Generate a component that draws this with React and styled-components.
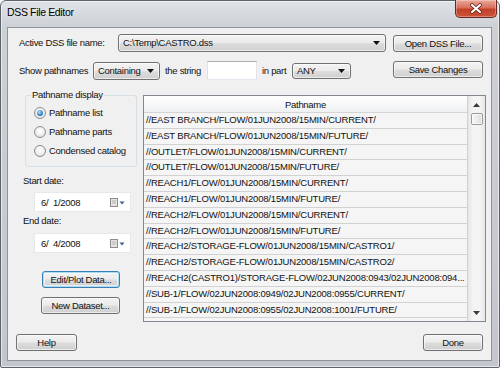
import React from 'react';
import styled, { createGlobalStyle, css } from 'styled-components';

const GlobalStyle = createGlobalStyle`
  html, body { margin: 0; padding: 0; background: #fff; }
  body { font-family: "Liberation Sans", Arial, sans-serif; }
  * { box-sizing: border-box; }
`;

const PATHS = [
  '//EAST BRANCH/FLOW/01JUN2008/15MIN/CURRENT/',
  '//EAST BRANCH/FLOW/01JUN2008/15MIN/FUTURE/',
  '//OUTLET/FLOW/01JUN2008/15MIN/CURRENT/',
  '//OUTLET/FLOW/01JUN2008/15MIN/FUTURE/',
  '//REACH1/FLOW/01JUN2008/15MIN/CURRENT/',
  '//REACH1/FLOW/01JUN2008/15MIN/FUTURE/',
  '//REACH2/FLOW/01JUN2008/15MIN/CURRENT/',
  '//REACH2/FLOW/01JUN2008/15MIN/FUTURE/',
  '//REACH2/STORAGE-FLOW/01JUN2008/15MIN/CASTRO1/',
  '//REACH2/STORAGE-FLOW/01JUN2008/15MIN/CASTRO2/',
  '//REACH2(CASTRO1)/STORAGE-FLOW/02JUN2008:0943/02JUN2008:094...',
  '//SUB-1/FLOW/02JUN2008:0949/02JUN2008:0955/CURRENT/',
  '//SUB-1/FLOW/02JUN2008:0955/02JUN2008:1001/FUTURE/',
];

const uiText = css`
  font-family: "Liberation Sans", Arial, sans-serif;
  font-size: 9.5px;
  letter-spacing: -0.3px;
  color: #111;
  white-space: nowrap;
`;

const face = css`
  background: linear-gradient(180deg, #f3f3f3 0%, #ebebeb 48%, #dddddd 52%, #cfcfcf 100%);
  border: 1px solid #707070;
  border-radius: 3px;
  box-shadow: inset 0 0 0 1px rgba(255, 255, 255, 0.6);
`;

const Window = styled.div`
  width: 500px;
  height: 368px;
  border: 1px solid #5d636b;
  border-radius: 6px 6px 2px 2px;
  background: linear-gradient(180deg, #dfe2e6 0%, #cdd1d6 26px, #c3c7cd 100%);
  box-shadow: inset 0 0 0 1px rgba(255, 255, 255, 0.55);
  padding: 0 7px 6px 6px;
  display: flex;
  flex-direction: column;
`;

const TitleBar = styled.div`
  height: 26px;
  display: flex;
  align-items: flex-start;
  justify-content: space-between;
`;

const Title = styled.div`
  font-family: "Liberation Sans", Arial, sans-serif;
  font-size: 10.5px;
  letter-spacing: -0.35px;
  line-height: 12px;
  padding-top: 5px;
  color: #000;
  text-shadow: 0 0 6px rgba(255, 255, 255, 0.9);
`;

const CloseButton = styled.div`
  width: 42px;
  height: 18px;
  margin: -1px -5px 0 0;
  border: 1px solid #6a281e;
  border-top: none;
  border-radius: 0 0 5px 5px;
  background: linear-gradient(180deg, #eaa899 0%, #d8705b 45%, #c2402a 55%, #cc5438 100%);
  box-shadow: inset 0 0 0 1px rgba(255, 255, 255, 0.3);
  display: flex;
  align-items: center;
  justify-content: center;
`;

const Client = styled.div`
  flex: 1;
  background: #f0f0f0;
  border: 1px solid #8d949d;
  padding: 5px 8px 9px 8px;
  display: flex;
  flex-direction: column;
`;

const Row = styled.div`
  display: flex;
  align-items: center;
  height: 19px;
  margin-top: ${p => p.$mt || 0}px;
`;

const Label = styled.span`
  ${uiText};
  line-height: 12px;
  width: ${p => (p.$w ? `${p.$w}px` : 'auto')};
  margin-left: ${p => p.$ml || 0}px;
  margin-top: ${p => p.$mt || 0}px;
`;

const Combo = styled.div`
  ${face};
  ${uiText};
  height: ${p => p.$h || 18}px;
  width: ${p => (p.$w ? `${p.$w}px` : 'auto')};
  flex: ${p => (p.$w ? 'none' : 1)};
  display: flex;
  align-items: center;
  justify-content: space-between;
  padding: 0 5px 0 4px;
`;

const TextBox = styled.div`
  width: 50px;
  height: 19px;
  background: #fff;
  border: 1px solid #e2e3ea;
  border-top-color: #abadb3;
  border-bottom-color: #e3e9ef;
`;

const Button = styled.div`
  ${face};
  ${uiText};
  width: ${p => p.$w}px;
  height: ${p => p.$h || 17}px;
  display: flex;
  align-items: center;
  justify-content: center;
  margin-left: ${p => p.$ml || 0}px;
  margin-top: ${p => p.$mt || 0}px;
  ${p => p.$focused && css`
    border-color: #3c7fb1;
    box-shadow: inset 0 0 0 1px #a9dcf6, inset 0 0 0 2px rgba(255, 255, 255, 0.6);
  `}
`;

const Spacer = styled.div`
  flex: 1;
`;

const Main = styled.div`
  margin-top: 9px;
  height: 233px;
  display: grid;
  grid-template-columns: 121px 1fr;
  column-gap: 6px;
`;

const LeftColumn = styled.div`
  display: flex;
  flex-direction: column;
  align-items: flex-start;
`;

const GroupBox = styled.fieldset`
  margin: 0 0 0 9px;
  padding: 0;
  width: 112px;
  border: 1px solid #d5dfe5;
  border-radius: 3px;
`;

const Legend = styled.legend`
  ${uiText};
  line-height: 12px;
  margin-left: 5px;
  padding: 0 1px;
`;

const RadioList = styled.div`
  display: flex;
  flex-direction: column;
  padding: 2px 0 6px 8px;
`;

const RadioRow = styled.div`
  ${uiText};
  height: 19px;
  display: flex;
  align-items: center;
  gap: 3px;
`;

const RadioDot = styled.span`
  width: 12px;
  height: 12px;
  border-radius: 50%;
  border: 1px solid #8e8f8f;
  background: radial-gradient(circle at 50% 40%, #ffffff 0%, #f2f2f2 45%, #d4d4d4 100%);
  display: flex;
  align-items: center;
  justify-content: center;
  &::after {
    content: '';
    width: 6px;
    height: 6px;
    border-radius: 50%;
    display: ${p => (p.$on ? 'block' : 'none')};
    background: radial-gradient(circle at 40% 35%, #bfe6fc 0%, #3587cc 55%, #0f4f8c 100%);
  }
`;

const DateBox = styled.div`
  ${uiText};
  width: 97px;
  height: 20px;
  margin: ${p => p.$mt}px 0 0 18px;
  background: #fff;
  border: 1px solid #e8e8e8;
  display: flex;
  align-items: center;
  padding: 0 5px 0 6px;
  white-space: pre;
  gap: 2px;
`;

const DateText = styled.span`
  flex: 1;
`;

const Table = styled.div`
  margin: 6px -3px 0 0;
  height: 227px;
  border: 1px solid #828790;
  display: flex;
  overflow: hidden;
`;

const Columns = styled.div`
  flex: 1;
  display: flex;
  flex-direction: column;
  border-right: 1px solid #d0d0d0;
  min-width: 0;
  background: #f5f5f5;
`;

const Header = styled.div`
  ${uiText};
  height: 17px;
  flex: none;
  display: flex;
  align-items: center;
  justify-content: center;
  background: linear-gradient(180deg, #ffffff 0%, #f7f8f9 50%, #eef0f2 100%);
  border-bottom: 1px solid #d5d5d5;
`;

const Cell = styled.div`
  font-family: "Liberation Sans", Arial, sans-serif;
  font-size: 9.5px;
  letter-spacing: -0.19px;
  color: #111;
  height: 15.8px;
  flex: none;
  line-height: 14.8px;
  padding-left: 2px;
  border-bottom: 1px solid #d2d2d2;
  white-space: nowrap;
  overflow: hidden;
`;

const ScrollBar = styled.div`
  width: 17px;
  display: flex;
  flex-direction: column;
  background: linear-gradient(90deg, #e6e6e6 0%, #f4f4f4 30%, #f4f4f4 70%, #e8e8e8 100%);
`;

const ScrollArrow = styled.div`
  height: 17px;
  flex: none;
  display: flex;
  align-items: center;
  justify-content: center;
`;

const Track = styled.div`
  flex: 1;
  padding: 0 2px 0 3px;
`;

const Thumb = styled.div`
  height: 12px;
  border: 1px solid #9b9b9b;
  border-radius: 2px;
  background: linear-gradient(90deg, #f6f6f6 0%, #ececec 50%, #dcdcdc 100%);
  box-shadow: inset 0 0 0 1px rgba(255, 255, 255, 0.7);
`;

const BottomRow = styled.div`
  margin-top: 12px;
  display: flex;
  justify-content: space-between;
  height: 17px;
`;

const Caret = () => (
  <svg width="7" height="4" viewBox="0 0 7 4">
    <path d="M0 0 H7 L3.5 4 Z" fill="#111" />
  </svg>
);

const CloseGlyph = () => (
  <svg width="14" height="11" viewBox="0 0 14 11">
    <path d="M3 2 L11 9 M11 2 L3 9" stroke="#5a1c12" strokeWidth="3.6" strokeLinecap="round" />
    <path d="M3 2 L11 9 M11 2 L3 9" stroke="#ffffff" strokeWidth="2.2" strokeLinecap="round" />
  </svg>
);

const CalendarGlyph = () => (
  <svg width="15" height="9" viewBox="0 0 15 9">
    <rect x="0.5" y="0.5" width="7" height="8" fill="#e3e3e3" stroke="#8c8c8c" />
    <path d="M2 3 H6 M2 5 H6" stroke="#b5b5b5" strokeWidth="1" />
    <path d="M9.5 3.5 H14.5 L12 6.5 Z" fill="#3e5f91" />
  </svg>
);

const ArrowGlyph = ({ up }) => (
  <svg width="7" height="4" viewBox="0 0 7 4">
    <path d={up ? 'M0 4 H7 L3.5 0 Z' : 'M0 0 H7 L3.5 4 Z'} fill="#3a3a3a" />
  </svg>
);

const DatePicker = ({ value, mt }) => (
  <DateBox $mt={mt}>
    <DateText>{value}</DateText>
    <CalendarGlyph />
  </DateBox>
);

export default function App() {
  return (
    <>
      <GlobalStyle />
      <Window>
        <TitleBar>
          <Title>DSS File Editor</Title>
          <CloseButton><CloseGlyph /></CloseButton>
        </TitleBar>
        <Client>
          <Row>
            <Label $ml={3} $w={99}>Active DSS file name:</Label>
            <Combo>
              <span>C:\Temp\CASTRO.dss</span>
              <Caret />
            </Combo>
            <Button $w={90} $ml={7} $mt={1}>Open DSS File...</Button>
          </Row>
          <Row $mt={9}>
            <Label $ml={3} $w={74}>Show pathnames</Label>
            <Combo $w={67} $h={18}>
              <span>Containing</span>
              <Caret />
            </Combo>
            <Label $ml={5} $w={42}>the string</Label>
            <TextBox />
            <Label $ml={5} $w={30}>in part</Label>
            <Combo $w={59} $h={16}>
              <span>ANY</span>
              <Caret />
            </Combo>
            <Spacer />
            <Button $w={90} $mt={-2}>Save Changes</Button>
          </Row>
          <Main>
            <LeftColumn>
              <GroupBox>
                <Legend>Pathname display</Legend>
                <RadioList>
                  <RadioRow><RadioDot $on />Pathname list</RadioRow>
                  <RadioRow><RadioDot />Pathname parts</RadioRow>
                  <RadioRow><RadioDot />Condensed catalog</RadioRow>
                </RadioList>
              </GroupBox>
              <Label $ml={7} $mt={8}>Start date:</Label>
              <DatePicker value="6/  1/2008" mt={5} />
              <Label $ml={7} $mt={3}>End date:</Label>
              <DatePicker value="6/  4/2008" mt={6} />
              <Button $w={78} $ml={26} $mt={18} $focused>Edit/Plot Data...</Button>
              <Button $w={79} $ml={25} $mt={9}>New Dataset...</Button>
            </LeftColumn>
            <Table>
              <Columns>
                <Header>Pathname</Header>
                {PATHS.map(p => (
                  <Cell key={p}>{p}</Cell>
                ))}
              </Columns>
              <ScrollBar>
                <ScrollArrow><ArrowGlyph up /></ScrollArrow>
                <Track><Thumb /></Track>
                <ScrollArrow><ArrowGlyph /></ScrollArrow>
              </ScrollBar>
            </Table>
          </Main>
          <BottomRow>
            <Button $w={61}>Help</Button>
            <Button $w={60}>Done</Button>
          </BottomRow>
        </Client>
      </Window>
    </>
  );
}
